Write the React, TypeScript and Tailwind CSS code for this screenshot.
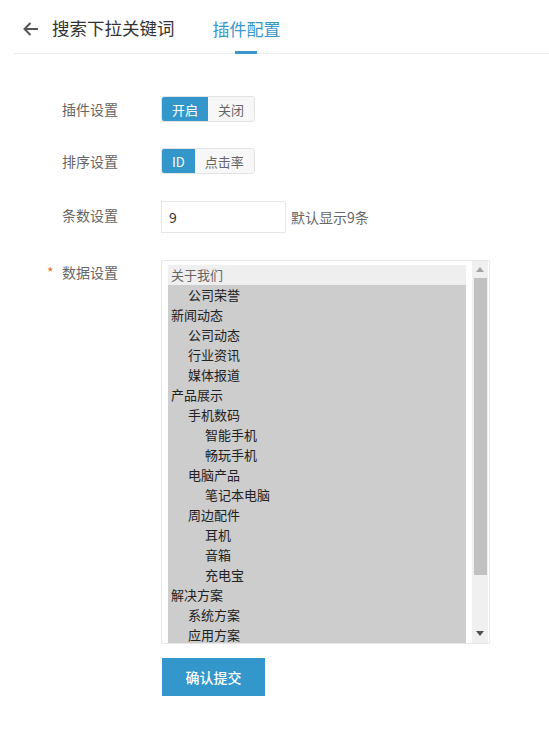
import React, { useState } from 'react';

const font = { fontFamily: '"Noto Sans CJK SC", "Noto Sans", sans-serif' };

type Item = { name: string; level: number };

const items: Item[] = [
  { name: '关于我们', level: 0 },
  { name: '公司荣誉', level: 1 },
  { name: '新闻动态', level: 0 },
  { name: '公司动态', level: 1 },
  { name: '行业资讯', level: 1 },
  { name: '媒体报道', level: 1 },
  { name: '产品展示', level: 0 },
  { name: '手机数码', level: 1 },
  { name: '智能手机', level: 2 },
  { name: '畅玩手机', level: 2 },
  { name: '电脑产品', level: 1 },
  { name: '笔记本电脑', level: 2 },
  { name: '周边配件', level: 1 },
  { name: '耳机', level: 2 },
  { name: '音箱', level: 2 },
  { name: '充电宝', level: 2 },
  { name: '解决方案', level: 0 },
  { name: '系统方案', level: 1 },
  { name: '应用方案', level: 1 },
];

const indent = ['pl-[3px]', 'pl-[20px]', 'pl-[37px]'];

function Toggle({ options, value, onChange }: { options: string[]; value: number; onChange: (i: number) => void }) {
  return (
    <div className="flex h-[26px] rounded-[3px] border border-[#e3e3e3] overflow-hidden text-[13px]">
      {options.map((o, i) => (
        <button
          key={o}
          onClick={() => onChange(i)}
          className={
            i === value
              ? 'px-[10px] bg-[#3397cb] text-white leading-none'
              : 'px-[10px] bg-[#f7f7f7] text-[#666] leading-none'
          }
        >
          {o}
        </button>
      ))}
    </div>
  );
}

export default function App() {
  const [plugin, setPlugin] = useState(0);
  const [sort, setSort] = useState(0);
  const [count, setCount] = useState('9');

  return (
    <div className="w-[549px] h-[740px] bg-white" style={font}>
      {/* Header */}
      <div className="ml-[14px] h-[54px] flex items-end border-b border-[#ececec]">
        <div className="flex items-center h-[53px] pl-[8px] pt-[4px]">
          <svg width="18" height="18" viewBox="0 0 18 18" className="mt-[1px]">
            <path d="M16 9H2.5M8.5 3L2.5 9l6 6" fill="none" stroke="#555" strokeWidth="2" />
          </svg>
          <span className="ml-[12px] text-[17.5px] text-[#333]">搜索下拉关键词</span>
        </div>
        <div className="ml-[38px] relative h-[53px] flex items-center pt-[4px]">
          <span className="text-[17px] text-[#3a97c9]">插件配置</span>
          <div className="absolute left-[22px] bottom-[-1px] w-[22px] h-[3px] bg-[#3a97c9]" />
        </div>
      </div>

      {/* Form */}
      <div className="pt-[42px] flex flex-col text-[14px]">
        <div className="flex items-center h-[26px]">
          <label className="w-[161px] pl-[62px] text-[#666]">插件设置</label>
          <Toggle options={['开启', '关闭']} value={plugin} onChange={setPlugin} />
        </div>

        <div className="flex items-center h-[26px] mt-[26px]">
          <label className="w-[161px] pl-[62px] text-[#666]">排序设置</label>
          <Toggle options={['ID', '点击率']} value={sort} onChange={setSort} />
        </div>

        <div className="flex items-center h-[32px] mt-[27px]">
          <label className="w-[161px] pl-[62px] text-[#666] pb-[3px]">条数设置</label>
          <input
            value={count}
            onChange={(e) => setCount(e.target.value)}
            className="w-[125px] h-[32px] border border-[#e6e6e6] px-[7px] text-[14px] text-[#333] outline-none"
          />
          <span className="ml-[5px] text-[#666]">默认显示9条</span>
        </div>

        <div className="flex mt-[27px]">
          <label className="w-[161px] pl-[47px] text-[#666] pt-[2px] flex">
            <span className="w-[15px] text-[#e8762b]">*</span>
            数据设置
          </label>
          <div className="w-[329px] h-[384px] border border-[#e6e6e6] rounded-[2px] flex overflow-hidden">
            <div className="flex-1 pl-[6px] pt-[4px] overflow-hidden">
              <div className="w-[298px] text-[13px] leading-[20px]">
                {items.map((it, i) => (
                  <div
                    key={it.name}
                    className={
                      (i === 0 ? 'bg-[#efefef] text-[#666] ' : 'bg-[#cdcdcd] text-[#222] ') +
                      'h-[20px] ' +
                      indent[it.level]
                    }
                  >
                    {it.name}
                  </div>
                ))}
              </div>
            </div>
            {/* scrollbar */}
            <div className="w-[16px] mr-[1px] bg-[#f0f0f0] flex flex-col items-center">
              <div className="h-[17px] flex items-center justify-center">
                <svg width="8" height="5" viewBox="0 0 8 5"><path d="M4 0L8 5H0z" fill="#a3a3a3" /></svg>
              </div>
              <div className="w-[13px] h-[297px] bg-[#c1c1c1]" />
              <div className="flex-1" />
              <div className="h-[17px] flex items-center justify-center mb-[1px]">
                <svg width="8" height="5" viewBox="0 0 8 5"><path d="M0 0H8L4 5z" fill="#505050" /></svg>
              </div>
            </div>
          </div>
        </div>

        <div className="pl-[162px] mt-[14px]">
          <button className="w-[103px] h-[38px] bg-[#3397cb] text-white text-[14px] font-medium">确认提交</button>
        </div>
      </div>
    </div>
  );
}
